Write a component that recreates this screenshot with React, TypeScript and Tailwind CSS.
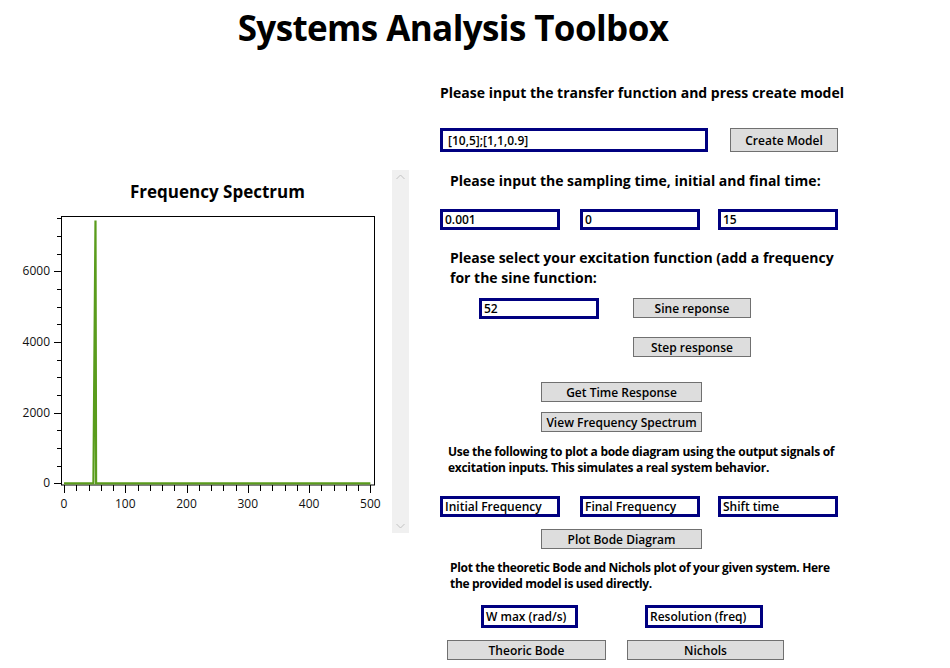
import React from "react";

// ---------------------------------------------------------------------------
// Small WPF-like controls
// ---------------------------------------------------------------------------

function Field({ w, h, text, className = "" }: { w: string; h: string; text: string; className?: string }) {
  return (
    <div
      className={`${w} ${h} border-[3px] border-[#000080] bg-white flex items-center pl-[2px] pt-[1px] text-[12px] font-semibold text-black leading-none ${className}`}
    >
      {text}
    </div>
  );
}

function Btn({ w, h, label, className = "" }: { w: string; h: string; label: string; className?: string }) {
  return (
    <div
      className={`${w} ${h} border border-[#707070] bg-[#dddddd] flex items-center justify-center pt-[2px] text-[12px] font-semibold text-black leading-none ${className}`}
    >
      {label}
    </div>
  );
}

// ---------------------------------------------------------------------------
// Frequency spectrum chart
// ---------------------------------------------------------------------------

const OY = 204; // page y of the svg top
const yOf = (v: number) => 483.3 - v * (70.67 / 2000) - OY;
const xOf = (f: number) => 64 + f * 0.6127;

function SpectrumChart() {
  const yTicks = Array.from({ length: 16 }, (_, i) => i * 500);
  const xTicks = Array.from({ length: 26 }, (_, i) => i * 20);
  const base = yOf(0);
  const points = [
    [xOf(0), base],
    [xOf(48), base],
    [xOf(51.4), yOf(7440)],
    [xOf(52.4), base],
    [xOf(500), base],
  ]
    .map((p) => p.join(","))
    .join(" ");

  return (
    <svg width="392" height="310" className="block">
      <rect x="61.5" y={216.5 - OY} width="313" height="268.5" fill="white" stroke="black" strokeWidth="1" />
      {yTicks.map((v) => {
        const major = v % 2000 === 0;
        const y = Math.round(yOf(v)) + 0.5;
        return <line key={v} x1={major ? 54 : 57} x2="61.5" y1={y} y2={y} stroke="black" strokeWidth="1" />;
      })}
      {[0, 2000, 4000, 6000].map((v) => (
        <text
          key={v}
          x="50"
          y={yOf(v) + 4}
          textAnchor="end"
          fontSize="12"
          fontFamily="'Open Sans', 'Noto Sans', sans-serif"
          fill="#111"
        >
          {v}
        </text>
      ))}
      {xTicks.map((f) => {
        const major = f % 100 === 0;
        const x = Math.round(xOf(f)) + 0.5;
        return <line key={f} x1={x} x2={x} y1={485 - OY} y2={485 - OY + (major ? 8 : 6)} stroke="black" strokeWidth="1" />;
      })}
      {[0, 100, 200, 300, 400, 500].map((f) => (
        <text
          key={f}
          x={xOf(f)}
          y={508 - OY}
          textAnchor="middle"
          fontSize="12"
          fontFamily="'Open Sans', 'Noto Sans', sans-serif"
          fill="#111"
        >
          {f}
        </text>
      ))}
      <polyline points={points} fill="none" stroke="#5a9c1c" strokeWidth="2.2" strokeLinejoin="miter" />
    </svg>
  );
}

function ScrollBar() {
  return (
    <div className="w-[17px] h-[363px] mt-[110px] bg-[#f0f0f0] flex flex-col items-center justify-between py-[4px]">
      <svg width="9" height="6" viewBox="0 0 9 6">
        <path d="M0.5 5 L4.5 1 L8.5 5" fill="none" stroke="#c2c2c2" strokeWidth="1" />
      </svg>
      <svg width="9" height="6" viewBox="0 0 9 6">
        <path d="M0.5 1 L4.5 5 L8.5 1" fill="none" stroke="#c2c2c2" strokeWidth="1" />
      </svg>
    </div>
  );
}

// ---------------------------------------------------------------------------
// App
// ---------------------------------------------------------------------------

export default function App() {
  return (
    <div className="w-[950px] h-[668px] overflow-hidden bg-white text-black font-['Open_Sans','Noto_Sans',sans-serif]">
      <div className="h-[60px] flex justify-center pr-[44px]">
        <h1 className="mt-[6px] text-[35px] font-bold leading-[44px] tracking-[-0.6px]">Systems Analysis Toolbox</h1>
      </div>

      <div className="flex">
        {/* left: chart + scrollbar */}
        <div className="w-[440px] flex">
          <div className="w-[392px] flex flex-col">
            <div className="w-[374px] pl-[61px] mt-[120px] h-[24px] text-center text-[17px] font-bold leading-[24px]">
              Frequency Spectrum
            </div>
            <SpectrumChart />
          </div>
          <ScrollBar />
        </div>

        {/* right: controls */}
        <div className="flex flex-col">
          <div className="mt-[23px] h-[20px] text-[14px] font-bold leading-[20px] whitespace-nowrap">
            Please input the transfer function and press create model
          </div>

          <div className="mt-[25px] flex">
            <Field w="w-[268px]" h="h-[24px]" text="[10,5];[1,1,0.9]" className="pl-[5px]" />
            <Btn w="w-[108px]" h="h-[24px]" label="Create Model" className="ml-[22px]" />
          </div>

          <div className="mt-[19px] ml-[10px] h-[20px] text-[14px] font-bold leading-[20px] whitespace-nowrap">
            Please input the sampling time, initial and final time:
          </div>

          <div className="mt-[18px] flex">
            <Field w="w-[120px]" h="h-[21px]" text="0.001" />
            <Field w="w-[120px]" h="h-[21px]" text="0" className="ml-[20px]" />
            <Field w="w-[120px]" h="h-[21px]" text="15" className="ml-[18px]" />
          </div>

          <div className="mt-[18px] ml-[10px] text-[14px] font-bold leading-[20px] whitespace-nowrap">
            <div>Please select your excitation function (add a frequency</div>
            <div>for the sine function:</div>
          </div>

          <div className="mt-[10px] flex">
            <Field w="w-[120px]" h="h-[21px]" text="52" className="ml-[39px]" />
            <Btn w="w-[118px]" h="h-[20px]" label="Sine reponse" className="ml-[34px]" />
          </div>

          <Btn w="w-[118px]" h="h-[20px]" label="Step response" className="mt-[18px] ml-[193px]" />

          <Btn w="w-[161px]" h="h-[20px]" label="Get Time Response" className="mt-[25px] ml-[101px]" />
          <Btn w="w-[161px]" h="h-[20px]" label="View Frequency Spectrum" className="mt-[10px] ml-[101px]" />

          <div className="mt-[12px] ml-[8px] text-[12px] font-bold leading-[16px] tracking-[-0.28px] whitespace-nowrap">
            <div>Use the following to plot a bode diagram using the output signals of</div>
            <div>excitation inputs. This simulates a real system behavior.</div>
          </div>

          <div className="mt-[20px] flex">
            <Field w="w-[120px]" h="h-[21px]" text="Initial Frequency" />
            <Field w="w-[120px]" h="h-[21px]" text="Final Frequency" className="ml-[20px]" />
            <Field w="w-[120px]" h="h-[21px]" text="Shift time" className="ml-[18px]" />
          </div>

          <Btn w="w-[161px]" h="h-[20px]" label="Plot Bode Diagram" className="mt-[12px] ml-[101px]" />

          <div className="mt-[11px] ml-[10px] text-[12px] font-bold leading-[16px] tracking-[-0.33px] whitespace-nowrap">
            <div>Plot the theoretic Bode and Nichols plot of your given system. Here</div>
            <div>the provided model is used directly.</div>
          </div>

          <div className="mt-[13px] flex">
            <Field w="w-[97px]" h="h-[23px]" text="W max (rad/s)" className="ml-[41px]" />
            <Field w="w-[118px]" h="h-[23px]" text="Resolution (freq)" className="ml-[67px]" />
          </div>

          <div className="mt-[12px] flex">
            <Btn w="w-[159px]" h="h-[20px]" label="Theoric Bode" className="ml-[7px]" />
            <Btn w="w-[157px]" h="h-[20px]" label="Nichols" className="ml-[21px]" />
          </div>
        </div>
      </div>
    </div>
  );
}
